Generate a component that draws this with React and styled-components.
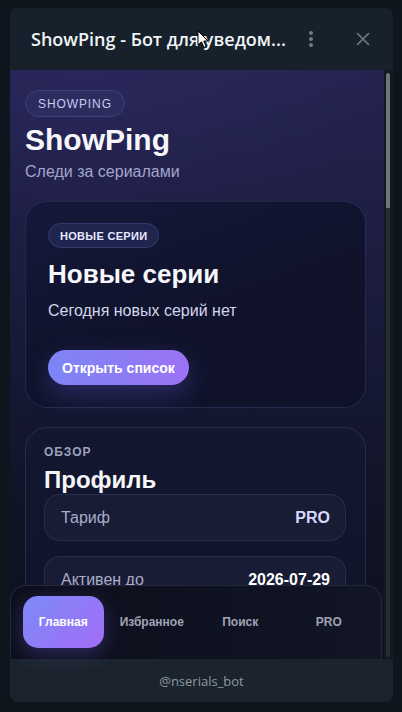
import React from "react";
import styled, { createGlobalStyle } from "styled-components";

const GlobalStyle = createGlobalStyle`
  * { box-sizing: border-box; }
  html, body { margin: 0; padding: 0; background: #0e151c; }
  body { font-family: "Liberation Sans", Arial, sans-serif; }
`;

const tabs = ["Главная", "Избранное", "Поиск", "PRO"];

const profile = [
  { label: "Тариф", value: "PRO", accent: true },
  { label: "Активен до", value: "2026-07-29" },
];

export default function App() {
  return (
    <>
      <GlobalStyle />
      <Page>
        <Window>
          <Header>
            <Title>ShowPing - Бот для уведом...</Title>
            <HeaderIcons>
              <svg width="6" height="18" viewBox="0 0 6 18">
                <circle cx="3" cy="3" r="2" fill="#6f7a85" />
                <circle cx="3" cy="9" r="2" fill="#6f7a85" />
                <circle cx="3" cy="15" r="2" fill="#6f7a85" />
              </svg>
              <svg width="14" height="14" viewBox="0 0 14 14">
                <path
                  d="M1.5 1.5 L12.5 12.5 M12.5 1.5 L1.5 12.5"
                  stroke="#6f7a85"
                  strokeWidth="1.6"
                  strokeLinecap="round"
                />
              </svg>
            </HeaderIcons>
            <Cursor width="12" height="19" viewBox="0 0 12 19">
              <path
                d="M1 1 L1 15 L4.5 11.8 L7 17.5 L9.2 16.6 L6.8 11 L11 11 Z"
                fill="#fff"
                stroke="#000"
                strokeWidth="1"
                strokeLinejoin="round"
              />
            </Cursor>
          </Header>

          <Body>
            <Content>
              <Pill>SHOWPING</Pill>
              <AppName>ShowPing</AppName>
              <Tagline>Следи за сериалами</Tagline>

              <HeroCard>
                <Chip>НОВЫЕ СЕРИИ</Chip>
                <CardTitle>Новые серии</CardTitle>
                <CardText>Сегодня новых серий нет</CardText>
                <PrimaryButton>Открыть список</PrimaryButton>
              </HeroCard>

              <ProfileCard>
                <Overline>ОБЗОР</Overline>
                <SectionTitle>Профиль</SectionTitle>
                {profile.map((row) => (
                  <InfoRow key={row.label}>
                    <InfoLabel>{row.label}</InfoLabel>
                    <InfoValue $accent={row.accent}>{row.value}</InfoValue>
                  </InfoRow>
                ))}
              </ProfileCard>
            </Content>

            <Scrollbar>
              <Thumb />
              <Track />
            </Scrollbar>

            <TabBar>
              {tabs.map((t, i) => (
                <Tab key={t} $active={i === 0}>
                  {t}
                </Tab>
              ))}
            </TabBar>
          </Body>

          <Footer>@nserials_bot</Footer>
        </Window>
      </Page>
    </>
  );
}

const Page = styled.div`
  width: 402px;
  height: 712px;
  padding: 8px 9px 10px 10px;
`;

const Window = styled.div`
  width: 383px;
  height: 694px;
  border-radius: 8px;
  overflow: hidden;
  background: #17212b;
  display: flex;
  flex-direction: column;
`;

const Header = styled.div`
  position: relative;
  height: 62px;
  flex-shrink: 0;
  display: flex;
  align-items: center;
  justify-content: space-between;
  padding: 0 23px 0 21px;
  background: #17212b;
`;

const Title = styled.div`
  font-family: "Open Sans", sans-serif;
  font-size: 18px;
  font-weight: 600;
  color: #f1f4f7;
  white-space: nowrap;
`;

const HeaderIcons = styled.div`
  display: flex;
  align-items: center;
  gap: 42px;
`;

const Cursor = styled.svg`
  position: absolute;
  left: 187px;
  top: 22px;
`;

const Body = styled.div`
  position: relative;
  flex: 1;
  display: flex;
  min-height: 0;
`;

const Content = styled.div`
  width: 374px;
  overflow: hidden;
  display: flex;
  flex-direction: column;
  align-items: flex-start;
  padding: 20px 18px 0 15px;
  background:
    radial-gradient(120% 40% at 20% 0%, rgba(52, 48, 110, 0.35), transparent 70%),
    linear-gradient(180deg, #242350 0%, #1d1d42 30%, #141730 58%, #0f1220 85%);
`;

const Pill = styled.div`
  height: 27px;
  padding: 0 12px;
  display: flex;
  align-items: center;
  border-radius: 14px;
  background: #2c2c5e;
  border: 1px solid #40407c;
  color: #c9cbf1;
  font-size: 12px;
  letter-spacing: 0.9px;
`;

const AppName = styled.h1`
  margin: 6px 0 0;
  font-size: 30px;
  line-height: 34px;
  font-weight: 700;
  color: #f6f6fb;
`;

const Tagline = styled.div`
  margin-top: 5px;
  font-size: 16px;
  line-height: 20px;
  color: #a2a5cb;
`;

const Card = styled.div`
  align-self: stretch;
  border-radius: 22px;
  border: 1px solid rgba(120, 128, 190, 0.2);
  display: flex;
  flex-direction: column;
  align-items: flex-start;
  flex-shrink: 0;
`;

const HeroCard = styled(Card)`
  margin-top: 19px;
  padding: 21px 22px 22px;
  background: linear-gradient(160deg, #15183a 0%, #10132b 50%, #0f1228 100%);
`;

const Chip = styled.div`
  height: 25px;
  padding: 0 11px;
  display: flex;
  align-items: center;
  border-radius: 13px;
  background: #202550;
  border: 1px solid #343a6c;
  color: #e7e9ff;
  font-size: 11px;
  font-weight: 700;
  letter-spacing: 0.3px;
`;

const CardTitle = styled.h2`
  margin: 11px 0 0;
  font-size: 26px;
  line-height: 30px;
  font-weight: 700;
  color: #f6f6fb;
`;

const CardText = styled.p`
  margin: 12px 0 0;
  font-size: 16px;
  line-height: 20px;
  color: #d3d5ec;
`;

const PrimaryButton = styled.button`
  margin-top: 29px;
  height: 35px;
  padding: 0 14px;
  border: none;
  border-radius: 18px;
  background: linear-gradient(90deg, #7c85f6 0%, #9c72f5 100%);
  box-shadow: 0 10px 26px rgba(110, 100, 240, 0.3);
  color: #fff;
  font-family: inherit;
  font-size: 14px;
  font-weight: 700;
`;

const ProfileCard = styled(Card)`
  margin-top: 19px;
  padding: 17px 19px 40px 18px;
  align-items: stretch;
  background: linear-gradient(180deg, #131730 0%, #111428 100%);
`;

const Overline = styled.div`
  font-size: 12px;
  line-height: 14px;
  font-weight: 700;
  letter-spacing: 1px;
  color: #9ea2bd;
`;

const SectionTitle = styled.h3`
  margin: 7px 0 0;
  font-size: 24px;
  line-height: 28px;
  font-weight: 700;
  color: #f6f6fb;
`;

const InfoRow = styled.div`
  height: 47px;
  flex-shrink: 0;
  display: flex;
  align-items: center;
  justify-content: space-between;
  padding: 0 15px 0 16px;
  border-radius: 16px;
  background: #181c34;
  border: 1px solid rgba(120, 128, 190, 0.18);

  & + & {
    margin-top: 15px;
  }
`;

const InfoLabel = styled.span`
  font-size: 16px;
  color: #a8acc9;
`;

const InfoValue = styled.span`
  font-size: 16px;
  font-weight: 700;
  color: ${(p) => (p.$accent ? "#d6d8ff" : "#ffffff")};
`;

const Scrollbar = styled.div`
  width: 9px;
  padding: 3px 3px 2px 2px;
  background: #121920;
  display: flex;
  flex-direction: column;
`;

const Thumb = styled.div`
  height: 135px;
  border-radius: 2px 2px 0 0;
  background: #6c757e;
`;

const Track = styled.div`
  flex: 1;
  border-radius: 0 0 2px 2px;
  background: #252d36;
`;

const TabBar = styled.nav`
  position: absolute;
  left: 0;
  bottom: 0;
  width: 372px;
  height: 74px;
  padding: 10px 12px 11px;
  display: grid;
  grid-template-columns: repeat(4, 1fr);
  gap: 8px;
  border-radius: 16px 16px 0 0;
  border: 1px solid #232838;
  border-bottom: none;
  background: linear-gradient(90deg, #0d0f1c 0%, #0f1220 60%, #121624 100%);
`;

const Tab = styled.div`
  display: flex;
  align-items: center;
  justify-content: center;
  border-radius: 15px;
  font-size: 12px;
  font-weight: 700;
  color: ${(p) => (p.$active ? "#ffffff" : "#a0a3b7")};
  background: ${(p) =>
    p.$active ? "linear-gradient(135deg, #7c8af8 0%, #a36cf6 100%)" : "transparent"};
  box-shadow: ${(p) => (p.$active ? "0 6px 20px rgba(120, 100, 240, 0.3)" : "none")};
`;

const Footer = styled.div`
  height: 43px;
  flex-shrink: 0;
  display: flex;
  align-items: center;
  justify-content: center;
  background: #1b242d;
  font-family: "Open Sans", sans-serif;
  font-size: 13px;
  color: #8e99a4;
`;
